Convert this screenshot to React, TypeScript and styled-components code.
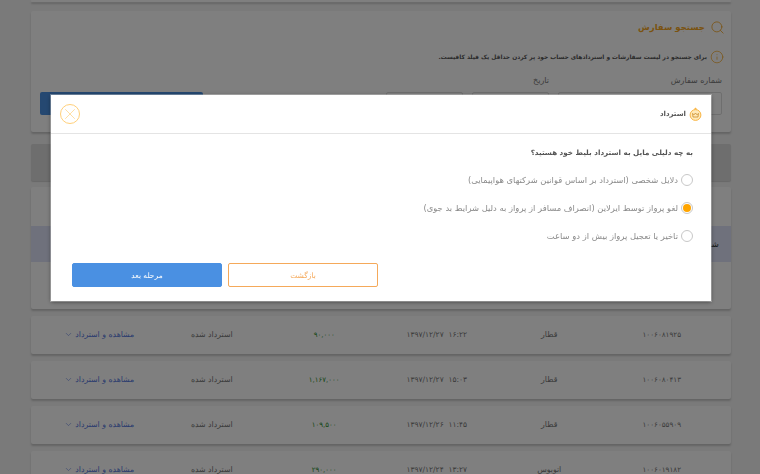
import React from 'react';
import styled, { createGlobalStyle } from 'styled-components';
import { Search, Info, ChevronDown, X } from 'lucide-react';

const GlobalStyle = createGlobalStyle`
    html, body {
        margin: 0;
        height: 100%;
        overflow: hidden;
        background: #f4f4f4;
        font-family: "DejaVu Sans", "Noto Sans", sans-serif;
    }
    * { box-sizing: border-box; }
`;

const Page = styled.div`
    direction: rtl;
    width: 760px;
    height: 474px;
    overflow: hidden;
    padding-right: 29px;
    padding-left: 31px;
`;

const Card = styled.div`
    background: #fff;
    border-radius: 2px;
    box-shadow: 0 2px 2px rgba(0, 0, 0, 0.18);
`;

const TopStub = styled(Card)`
    height: 2px;
    margin-bottom: 9px;
`;

const SearchCard = styled(Card)`
    height: 121px;
    padding: 9px 6px 0 9px;
    margin-bottom: 12px;
`;

const SearchTitle = styled.h2`
    display: flex;
    align-items: center;
    gap: 5px;
    margin: 0;
    font-size: 8.5px;
    letter-spacing: -0.75px;
    line-height: 15px;
    font-weight: 700;
    color: #f5a623;
`;

const Notice = styled.p`
    display: flex;
    align-items: center;
    gap: 3px;
    margin: 15px 1px 0 0;
    font-size: 5.9px;
    letter-spacing: -0.25px;
    line-height: 12px;
    font-weight: 700;
    color: #555;
`;

const FilterRow = styled.div`
    display: flex;
    gap: 9px;
    margin-top: 10px;
    padding-right: 3px;
    align-items: flex-end;
`;

const Field = styled.div<{ $width: number }>`
    width: ${props => props.$width}px;
    flex: none;
`;

const FieldLabel = styled.div`
    font-size: 8px;
    letter-spacing: -0.3px;
    line-height: 14px;
    margin-bottom: 4px;
    color: #777;
    height: 14px;
`;

const FieldBox = styled.div`
    height: 23px;
    background: #fff;
    border: 1px solid #ddd;
    border-radius: 2px;
`;

const SubmitButton = styled.div`
    width: 163px;
    height: 23px;
    margin-right: auto;
    background: #4a90e2;
    border-radius: 2px;
`;

const TableHead = styled.div`
    height: 37px;
    background: #dcdcdc;
    border-radius: 2px;
    box-shadow: 0 1px 1px rgba(0, 0, 0, 0.15);
    margin-bottom: 6px;
`;

const ExpandedCard = styled(Card)`
    height: 122px;
    padding-top: 39px;
    margin-bottom: 7px;
`;

const HighlightBand = styled.div`
    height: 36px;
    background: #dfe3f8;
    padding: 0 12px;
    font-size: 8.5px;
    line-height: 36px;
    color: #333;
`;

const Row = styled(Card)`
    display: grid;
    grid-template-columns: repeat(6, 1fr);
    align-items: center;
    height: 38px;
    padding: 0 13px 1px 12px;
    margin-bottom: 7px;
`;

const Cell = styled.div`
    text-align: center;
    font-size: 7.8px;
    color: #777;
    white-space: nowrap;
`;

const OrderId = styled(Cell)`
    font-size: 7.2px;
`;

const DateCell = styled(Cell)`
    font-size: 7.5px;
`;

const Amount = styled(Cell)`
    color: #2f8f2f;
    font-size: 7px;
`;

const ActionCell = styled(Cell)`
    display: flex;
    justify-content: center;
    align-items: center;
    gap: 2px;
    color: #5577dd;
`;

const Overlay = styled.div`
    position: fixed;
    inset: 0;
    direction: rtl;
    display: flex;
    align-items: flex-start;
    padding: 95px 49px 0 0;
    background: rgba(0, 0, 0, 0.5);
`;

const Modal = styled.div`
    width: 660px;
    height: 206px;
    background: #fff;
    box-shadow: 0 0 0 1px rgba(255, 255, 255, 0.3), 0 1px 4px rgba(0, 0, 0, 0.5);
`;

const ModalHeader = styled.header`
    display: flex;
    align-items: center;
    justify-content: space-between;
    height: 39px;
    padding: 0 9px 0 9px;
    border-bottom: 1px solid #e4e4e4;
`;

const ModalTitle = styled.h3`
    display: flex;
    align-items: center;
    gap: 3px;
    margin: 0;
    font-size: 7px;
    letter-spacing: -0.3px;
    font-weight: 700;
    color: #555;
`;

const CloseButton = styled.div`
    display: flex;
    align-items: center;
    justify-content: center;
    width: 20px;
    height: 20px;
    border: 1px solid #ffd07a;
    border-radius: 50%;
    color: #ffd07a;
`;

const ModalBody = styled.div`
    padding: 12px 18px 0 21px;
`;

const Question = styled.p`
    margin: 0 0 13px;
    font-size: 7.2px;
    letter-spacing: -0.35px;
    line-height: 14px;
    font-weight: 700;
    color: #555;
`;

const Options = styled.div`
    display: flex;
    flex-direction: column;
    gap: 14px;
`;

const Option = styled.label`
    display: flex;
    align-items: center;
    gap: 3px;
    height: 14px;
    font-size: 8.4px;
    color: #8a8a8a;
`;

const Radio = styled.span<{ $checked?: boolean }>`
    display: flex;
    align-items: center;
    justify-content: center;
    width: 12px;
    height: 12px;
    border-radius: 50%;
    border: 1px solid #c8c8c8;
    flex: none;

    &::after {
        content: '';
        display: ${props => (props.$checked ? 'block' : 'none')};
        width: 8px;
        height: 8px;
        border-radius: 50%;
        background: #ffa500;
    }
`;

const Actions = styled.div`
    display: flex;
    justify-content: flex-end;
    gap: 6px;
    margin-top: 20px;
`;

const OutlineButton = styled.div`
    display: flex;
    align-items: center;
    justify-content: center;
    width: 150px;
    height: 24px;
    border: 1px solid #f5a95a;
    border-radius: 2px;
    font-size: 7.5px;
    color: #f5a95a;
`;

const PrimaryButton = styled(OutlineButton)`
    background: #4a90e2;
    border-color: #4a90e2;
    color: #fff;
`;

const RefundIcon = () => (
    <svg width="13" height="14" viewBox="0 0 13 14" fill="none">
        <circle cx="6.5" cy="8" r="5.4" fill="#ffe9b8" stroke="#f9b544" strokeWidth="1" />
        <path d="M6.5 0.6 L8.4 2.6 L4.6 2.6 Z" fill="#f9b544" />
        <path d="M3.6 6.4 L5 7.8 L6.5 6 L8 7.8 L9.4 6.4 L9 10 L4 10 Z" stroke="#c98a2a" strokeWidth="0.8" strokeLinejoin="round" />
    </svg>
);

const orders = [
    { id: '۱۰۰۶۰۸۱۹۲۵', type: 'قطار', date: '۱۶:۲۲\u00a0\u00a0۱۳۹۷/۱۲/۲۷', amount: '۹۰,۰۰۰' },
    { id: '۱۰۰۶۰۸۰۴۱۳', type: 'قطار', date: '۱۵:۰۳\u00a0\u00a0۱۳۹۷/۱۲/۲۷', amount: '۱,۱۶۷,۰۰۰' },
    { id: '۱۰۰۶۰۵۵۹۰۹', type: 'قطار', date: '۱۱:۴۵\u00a0\u00a0۱۳۹۷/۱۲/۲۶', amount: '۱۰۹,۵۰۰' },
    { id: '۱۰۰۶۰۱۹۱۸۲', type: 'اتوبوس', date: '۱۳:۲۷\u00a0\u00a0۱۳۹۷/۱۲/۲۴', amount: '۲۹۰,۰۰۰' },
];

const reasons = [
    { label: 'دلایل شخصی (استرداد بر اساس قوانین شرکتهای هواپیمایی)' },
    { label: 'لغو پرواز توسط ایرلاین (انصراف مسافر از پرواز به دلیل شرایط بد جوی)', checked: true },
    { label: 'تاخیر یا تعجیل پرواز بیش از دو ساعت' },
];

const App: React.FC = () => (
    <>
        <GlobalStyle />
        <Page>
            <TopStub />
            <SearchCard>
                <SearchTitle>
                    <Search size={15} strokeWidth={1.3} color="#f5a623" />
                    جستجو سفارش
                </SearchTitle>
                <Notice>
                    <Info size={14} strokeWidth={1.2} color="#f5a623" />
                    برای جستجو در لیست سفارشات و استردادهای حساب خود پر کردن حداقل یک فیلد کافیست.
                </Notice>
                <FilterRow>
                    <Field $width={164}>
                        <FieldLabel>شماره سفارش</FieldLabel>
                        <FieldBox />
                    </Field>
                    <Field $width={77}>
                        <FieldLabel>تاریخ</FieldLabel>
                        <FieldBox />
                    </Field>
                    <Field $width={77}>
                        <FieldLabel />
                        <FieldBox />
                    </Field>
                    <SubmitButton />
                </FilterRow>
            </SearchCard>
            <TableHead />
            <ExpandedCard>
                <HighlightBand>شماره</HighlightBand>
            </ExpandedCard>
            {orders.map(order => (
                <Row key={order.id}>
                    <OrderId>{order.id}</OrderId>
                    <Cell>{order.type}</Cell>
                    <DateCell>{order.date}</DateCell>
                    <Amount>{order.amount}</Amount>
                    <Cell>استرداد شده</Cell>
                    <ActionCell>
                        مشاهده و استرداد
                        <ChevronDown size={9} strokeWidth={1.4} />
                    </ActionCell>
                </Row>
            ))}
        </Page>
        <Overlay>
            <Modal>
                <ModalHeader>
                    <ModalTitle>
                        <RefundIcon />
                        استرداد
                    </ModalTitle>
                    <CloseButton>
                        <X size={20} strokeWidth={0.9} />
                    </CloseButton>
                </ModalHeader>
                <ModalBody>
                    <Question>به چه دلیلی مایل به استرداد بلیط خود هستید؟</Question>
                    <Options>
                        {reasons.map(reason => (
                            <Option key={reason.label}>
                                <Radio $checked={reason.checked} />
                                {reason.label}
                            </Option>
                        ))}
                    </Options>
                    <Actions>
                        <OutlineButton>بازگشت</OutlineButton>
                        <PrimaryButton>مرحله بعد</PrimaryButton>
                    </Actions>
                </ModalBody>
            </Modal>
        </Overlay>
    </>
);

export default App;
